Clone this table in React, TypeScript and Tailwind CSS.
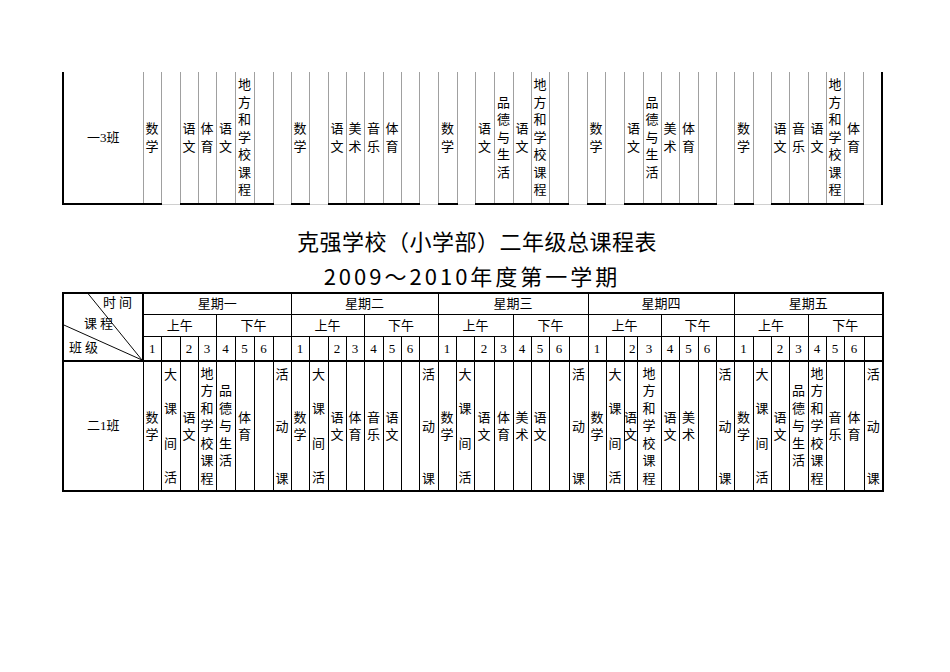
import React from 'react';

const WIDTHS = [
  'w-[18px]', 'w-[19px]', 'w-[18px]', 'w-[18px]', 'w-[19px]', 'w-[19px]', 'w-[19px]', 'w-[18px]',
  'w-[18px]', 'w-[19px]', 'w-[18px]', 'w-[18px]', 'w-[19px]', 'w-[18px]', 'w-[18px]', 'w-[19px]',
  'w-[18px]', 'w-[18px]', 'w-[20px]', 'w-[19px]', 'w-[18px]', 'w-[18px]', 'w-[20px]', 'w-[19px]',
  'w-[18px]', 'w-[18px]', 'w-[13px]', 'w-[24px]', 'w-[18px]', 'w-[19px]', 'w-[18px]', 'w-[18px]',
  'w-[19px]', 'w-[18px]', 'w-[18px]', 'w-[19px]', 'w-[18px]', 'w-[18px]', 'w-[20px]', 'w-[19px]',
];

const TOP_WIDTHS = [
  'w-[18px]', 'w-[19px]', 'w-[18px]', 'w-[18px]', 'w-[19px]', 'w-[19px]', 'w-[19px]', 'w-[18px]',
  'w-[18px]', 'w-[19px]', 'w-[18px]', 'w-[18px]', 'w-[19px]', 'w-[18px]', 'w-[18px]', 'w-[19px]',
  'w-[19px]', 'w-[18px]', 'w-[19px]', 'w-[19px]', 'w-[18px]', 'w-[18px]', 'w-[19px]', 'w-[19px]',
  'w-[18px]', 'w-[19px]', 'w-[19px]', 'w-[18px]', 'w-[18px]', 'w-[19px]', 'w-[18px]', 'w-[18px]',
  'w-[19px]', 'w-[18px]', 'w-[18px]', 'w-[19px]', 'w-[18px]', 'w-[18px]', 'w-[19px]', 'w-[19px]',
];

const DAYS = ['星期一', '星期二', '星期三', '星期四', '星期五'];
const NUMS = ['1', '', '2', '3', '4', '5', '6', ''];

const CLASS_13 = [
  ['数学', '', '语文', '体育', '语文', '地方和学校课程', '', ''],
  ['数学', '', '语文', '美术', '音乐', '体育', '', ''],
  ['数学', '', '语文', '品德与生活', '语文', '地方和学校课程', '', ''],
  ['数学', '', '语文', '品德与生活', '美术', '体育', '', ''],
  ['数学', '', '语文', '音乐', '语文', '地方和学校课程', '体育', ''],
];

const CLASS_21 = [
  ['数学', '大课间活', '语文', '地方和学校课程', '品德与生活', '体育', '', '活动课'],
  ['数学', '大课间活', '语文', '体育', '音乐', '语文', '', '活动课'],
  ['数学', '大课间活', '语文', '体育', '美术', '语文', '', '活动课'],
  ['数学', '大课间活', '语文', '地方和学校课程', '语文', '美术', '', '活动课'],
  ['数学', '大课间活', '语文', '品德与生活', '地方和学校课程', '音乐', '体育', '活动课'],
];

function Stack({ text }: { text: string }) {
  return (
    <div className="flex flex-col items-center leading-[17.5px]">
      {text.split('').map((c, i) => (
        <span key={i}>{c}</span>
      ))}
    </div>
  );
}

// spread chars top to bottom (大课间活 / 活动课 in merged cells)
function Spread({ text }: { text: string }) {
  return (
    <div className="flex flex-col items-center justify-between h-[121px] leading-[17px]">
      {text.split('').map((c, i) => (
        <span key={i}>{c}</span>
      ))}
    </div>
  );
}

function TopTable() {
  return (
    <table className="border-collapse table-fixed w-[820px]">
      <colgroup>
        <col className="w-[80px]" />
        {TOP_WIDTHS.map((w, i) => (
          <col key={i} className={w} />
        ))}
      </colgroup>
      <tbody>
        <tr>
          <td className="h-[132px] p-0 text-center align-middle border-l-2 border-l-black border-r border-r-[#a0a0a0] border-b-2 border-b-black">
            一3班
          </td>
          {CLASS_13.flatMap((day, d) =>
            day.map((s, i) => {
              const gap = i === 1 || i === 7;
              const last = d === 4 && i === 7;
              return (
                <td
                  key={`${d}-${i}`}
                  className={`p-0 align-middle border-x border-[#a0a0a0] ${
                    gap ? 'border-b border-b-[#d0d0d0]' : 'border-b-2 border-b-black'
                  } ${last ? 'border-r-2 border-r-black' : ''}`}
                >
                  {s && <Stack text={s} />}
                </td>
              );
            })
          )}
        </tr>
      </tbody>
    </table>
  );
}

function HeaderCorner() {
  return (
    <td rowSpan={3} className="relative p-0 border-2 border-black align-top">
      <svg className="absolute inset-0 w-full h-full" viewBox="0 0 80 68" preserveAspectRatio="none">
        <line x1="25" y1="0" x2="80" y2="68" stroke="#000" strokeWidth="1" />
        <line x1="0" y1="32" x2="80" y2="68" stroke="#000" strokeWidth="1" />
      </svg>
      <div className="flex flex-col h-[66px] text-[13px]">
        <div className="h-[20px] leading-[18px] text-right pr-[7px] tracking-[3px]">时间</div>
        <div className="h-[23px] leading-[20px] pl-[20px] tracking-[3px]">课程</div>
        <div className="h-[23px] leading-[22px] pl-[5px] tracking-[3px]">班级</div>
      </div>
    </td>
  );
}

function MainTable() {
  return (
    <table className="border-collapse table-fixed w-[820px] border-2 border-black">
      <colgroup>
        <col className="w-[80px]" />
        {WIDTHS.map((w, i) => (
          <col key={i} className={w} />
        ))}
      </colgroup>
      <tbody>
        <tr className="h-[21px]">
          <HeaderCorner />
          {DAYS.map((d) => (
            <td key={d} colSpan={8} className="p-0 text-center border border-black">
              {d}
            </td>
          ))}
        </tr>
        <tr className="h-[21px]">
          {DAYS.map((d) => (
            <React.Fragment key={d}>
              <td colSpan={4} className="p-0 text-center border border-black">上午</td>
              <td colSpan={4} className="p-0 text-center border border-black">下午</td>
            </React.Fragment>
          ))}
        </tr>
        <tr className="h-[23px]">
          {DAYS.map((d) =>
            NUMS.map((n, i) => (
              <td
                key={`${d}-${i}`}
                className={`p-0 border border-black border-b-2 ${d === '星期四' && i === 2 ? 'text-right pr-[1px]' : 'text-center'}`}
              >
                {n}
              </td>
            ))
          )}
        </tr>
        <tr>
          <td className="h-[130px] p-0 text-center border border-black">二1班</td>
          {CLASS_21.flatMap((day, d) =>
            day.map((s, i) => (
              <td key={`${d}-${i}`} className="p-0 align-middle border border-black overflow-visible whitespace-nowrap">
                {s && (i === 1 || i === 7 ? <Spread text={s} /> : <Stack text={s} />)}
              </td>
            ))
          )}
        </tr>
      </tbody>
    </table>
  );
}

export default function App() {
  return (
    <div
      className="w-[950px] h-[672px] bg-white text-black text-[13px] overflow-hidden"
      style={{ fontFamily: "'Liberation Serif', 'Noto Sans CJK SC', serif" }}
    >
      <div className="pl-[62px] pt-[72px]">
        <TopTable />
        <div className="w-[820px] mt-[17px] text-center font-['Noto_Sans_CJK_SC',sans-serif]">
          <div className="h-[37px] leading-[37px] text-[22px] tracking-[0.5px] pl-[10px]">克强学校（小学部）二年级总课程表</div>
          <div className="h-[33px] leading-[33px] text-[22px] tracking-[3px]">2009～2010年度第一学期</div>
        </div>
        <MainTable />
      </div>
    </div>
  );
}
